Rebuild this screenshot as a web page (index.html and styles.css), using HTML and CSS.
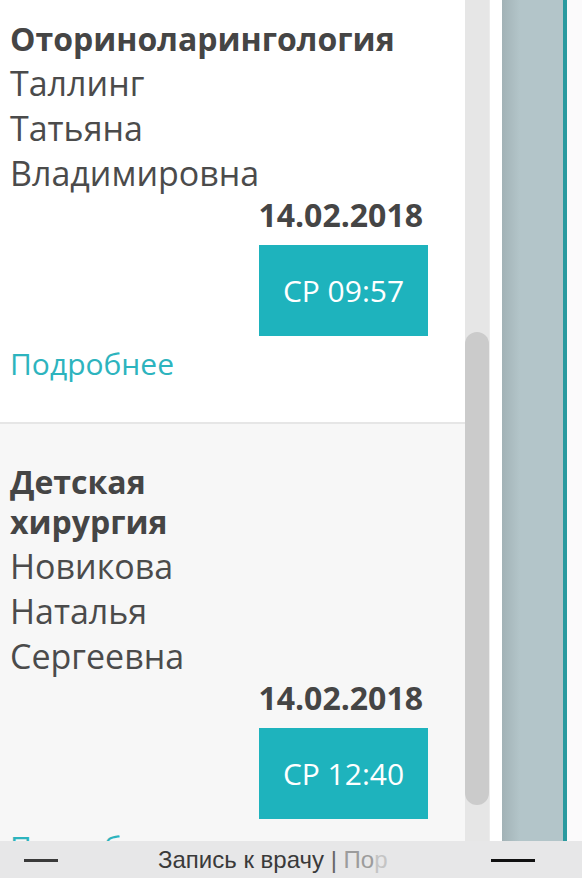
FILE: index.html
```html
<!DOCTYPE html>
<html lang="ru">
<head>
    <meta charset="UTF-8">
    <meta name="viewport" content="width=device-width, initial-scale=1.0">
    <title>Запись к врачу</title>
    <link rel="stylesheet" href="styles.css">
</head>
<body>
    <div class="screen">
        <div class="view">
            <div class="list">
                <div class="list-inner">

                    <div class="visit visit-first">
                        <p class="visit-title">Оториноларингология</p>
                        <p class="visit-doctor">Таллинг Татьяна Владимировна</p>
                        <p class="visit-date">14.02.2018</p>
                        <div class="visit-time">СР 09:57</div>
                        <a class="visit-more" href="#">Подробнее</a>
                    </div>

                    <div class="visit visit-second">
                        <p class="visit-title">Детская хирургия</p>
                        <p class="visit-doctor">Новикова Наталья Сергеевна</p>
                        <p class="visit-date">14.02.2018</p>
                        <div class="visit-time">СР 12:40</div>
                        <a class="visit-more" href="#">Подробнее</a>
                    </div>

                </div>
            </div>

            <div class="scrollbar">
                <div class="scrollbar-thumb"></div>
            </div>
            <div class="gap"></div>
            <div class="side-panel"></div>
            <div class="side-edge"></div>
        </div>

        <div class="tabbar">
            <span class="tab-dash tab-dash-left"></span>
            <p class="tab-title">Запись к врачу <span class="tab-sep">|</span> <span class="tab-next">По<span class="tab-fade">р</span></span></p>
            <span class="tab-dash tab-dash-right"></span>
        </div>
    </div>
</body>
</html>
```

FILE: styles.css
```css
body{
    margin: 0;
    background-color: white;
    font-family: "Open Sans", "Noto Sans", sans-serif;
    color: #464646;
}
p{
    margin: 0;
}
.screen{
    display: flex;
    flex-direction: column;
    width: 582px;
    height: 878px;
    overflow: hidden;
}
.view{
    display: flex;
    flex-direction: row;
    height: 841px;
    overflow: hidden;
}
.list{
    width: 465px;
    flex-shrink: 0;
    overflow: hidden;
}
.list-inner{
    margin-top: -19px;
}
.visit{
    padding: 38px 37px 36px 10px;
}
.visit-first{
    background-color: white;
    border-bottom: 2px solid #e6e6e6;
}
.visit-second{
    background-color: #f7f7f7;
}
.visit-title{
    width: 255px;
    font-size: 32px;
    font-weight: bold;
    line-height: 40px;
    margin-bottom: 2px;
    color: #454545;
}
.visit-doctor{
    width: 255px;
    font-size: 34px;
    line-height: 45px;
    color: #4b4b4b;
}
.visit-date{
    text-align: right;
    font-size: 32px;
    font-weight: bold;
    line-height: 38px;
    padding-right: 5px;
    color: #454545;
}
.visit-time{
    display: flex;
    align-items: center;
    justify-content: center;
    width: 169px;
    height: 91px;
    margin-top: 11px;
    margin-left: auto;
    background-color: #1eb3bd;
    color: white;
    font-size: 30px;
}
.visit-more{
    display: block;
    margin-top: 5px;
    font-size: 30px;
    line-height: 45px;
    color: #2db4be;
    text-decoration: none;
}
.scrollbar{
    width: 24px;
    flex-shrink: 0;
    background-color: #e6e6e6;
    border-right: 1px solid #ececec;
    padding-top: 332px;
}
.scrollbar-thumb{
    height: 473px;
    background-color: #cbcbcb;
    border-radius: 12px;
}
.gap{
    width: 12px;
    flex-shrink: 0;
    background-color: white;
}
.side-panel{
    width: 61px;
    flex-shrink: 0;
    background: linear-gradient(to right, #a2b2b6, #b3c5c9 18px, #b3c5c9);
}
.side-edge{
    flex: 1;
    background-color: #fbfafb;
    border-left: 4px solid #2a9a9f;
}
.tabbar{
    display: flex;
    flex-direction: row;
    align-items: center;
    height: 37px;
    background-color: #e7e7e8;
    font-family: "Liberation Sans", Arial, sans-serif;
}
.tab-dash{
    display: block;
    height: 3px;
    margin-top: 1px;
}
.tab-dash-left{
    width: 34px;
    margin-left: 24px;
    background-color: #3a3a3a;
}
.tab-dash-right{
    width: 44px;
    margin-right: 47px;
    background-color: #111111;
}
.tab-title{
    flex: 1;
    padding-left: 100px;
    font-size: 24px;
    color: #3a3a3a;
    white-space: nowrap;
}
.tab-sep{
    color: #666666;
}
.tab-next{
    color: #9c9c9c;
}
.tab-fade{
    color: #c4c4c4;
}
```
